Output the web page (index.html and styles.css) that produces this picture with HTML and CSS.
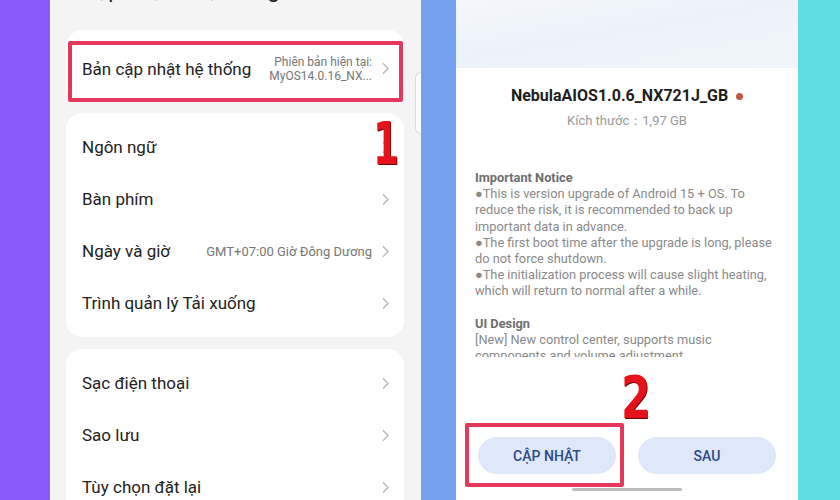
FILE: index.html
```html
<!DOCTYPE html>
<html lang="vi">
<head>
    <meta charset="UTF-8">
    <meta name="viewport" content="width=device-width, initial-scale=1.0">
    <title>Cập nhật hệ thống</title>
    <link rel="stylesheet" href="styles.css">
</head>
<body>
    <div class="stage">
        <div class="side side-purple"></div>

        <!-- Left phone: settings list -->
        <div class="phone-left">
            <h2 class="page-title">Cập nhật &amp; hệ thống</h2>

            <div class="card card-first">
                <div class="row">
                    <span class="row-label">Bản cập nhật hệ thống</span>
                    <span class="row-value two-line">Phiên bản hiện tại:<br>MyOS14.0.16_NX...</span>
                    <svg class="chevron" viewBox="0 0 8 14"><polyline points="1,1 7,7 1,13"/></svg>
                </div>
                <div class="highlight"></div>
            </div>

            <div class="card">
                <div class="row">
                    <span class="row-label">Ngôn ngữ</span>
                    <svg class="chevron" viewBox="0 0 8 14"><polyline points="1,1 7,7 1,13"/></svg>
                </div>
                <div class="row">
                    <span class="row-label">Bàn phím</span>
                    <svg class="chevron" viewBox="0 0 8 14"><polyline points="1,1 7,7 1,13"/></svg>
                </div>
                <div class="row">
                    <span class="row-label">Ngày và giờ</span>
                    <span class="row-value">GMT+07:00 Giờ Đông Dương</span>
                    <svg class="chevron" viewBox="0 0 8 14"><polyline points="1,1 7,7 1,13"/></svg>
                </div>
                <div class="row">
                    <span class="row-label">Trình quản lý Tải xuống</span>
                    <svg class="chevron" viewBox="0 0 8 14"><polyline points="1,1 7,7 1,13"/></svg>
                </div>
            </div>

            <div class="card">
                <div class="row">
                    <span class="row-label">Sạc điện thoại</span>
                    <svg class="chevron" viewBox="0 0 8 14"><polyline points="1,1 7,7 1,13"/></svg>
                </div>
                <div class="row">
                    <span class="row-label">Sao lưu</span>
                    <svg class="chevron" viewBox="0 0 8 14"><polyline points="1,1 7,7 1,13"/></svg>
                </div>
                <div class="row">
                    <span class="row-label">Tùy chọn đặt lại</span>
                    <svg class="chevron" viewBox="0 0 8 14"><polyline points="1,1 7,7 1,13"/></svg>
                </div>
            </div>

            <div class="edge-tab"></div>
            <div class="step step-one">1</div>
        </div>

        <div class="side side-blue"></div>

        <!-- Right phone: update dialog -->
        <div class="phone-right">
            <div class="update-banner"></div>
            <div class="update-name">NebulaAIOS1.0.6_NX721J_GB <span class="dot"></span></div>
            <div class="update-size">Kích thước：1,97 GB</div>

            <div class="notes">
                <div class="notes-title">Important Notice</div>
                <p>●This is version upgrade of Android 15 + OS. To<br>reduce the risk, it is recommended to back up<br>important data in advance.<br>●The first boot time after the upgrade is long, please<br>do not force shutdown.<br>●The initialization process will cause slight heating,<br>which will return to normal after a while.</p>
                <div class="notes-title">UI Design</div>
                <p>[New] New control center, supports music<br>components and volume adjustment</p>
            </div>

            <div class="actions">
                <button class="pill">CẬP NHẬT</button>
                <button class="pill">SAU</button>
            </div>
            <div class="home-bar"></div>

            <div class="highlight highlight-btn"></div>
            <div class="step step-two">2</div>
        </div>

        <div class="side side-cyan"></div>
    </div>
</body>
</html>
```

FILE: styles.css
```css
body {
    margin: 0;
    font-family: Roboto, "Noto Sans", sans-serif;
    overflow: hidden;
}

.stage {
    display: flex;
    width: 840px;
    height: 500px;
    overflow: hidden;
}

.side {
    flex-shrink: 0;
}

.side-purple {
    width: 50px;
    background-color: #8a5af9;
}

.side-blue {
    width: 35px;
    background-color: #74a0ef;
}

.side-cyan {
    width: 42px;
    background-color: #5fdde3;
}

/* left phone */
.phone-left {
    position: relative;
    width: 371px;
    flex-shrink: 0;
    background-color: #f4f4f4;
    padding: 0 17px 0 16px;
    box-sizing: border-box;
    overflow: hidden;
}

.page-title {
    height: 30px;
    margin: -25px 0 25px 16px;
    font-size: 22px;
    line-height: 30px;
    font-weight: 400;
    color: #222;
}

.card {
    position: relative;
    background-color: #fff;
    border-radius: 16px;
    padding: 8px 0;
    margin-bottom: 12px;
}

.card-first {
    height: 71px;
    padding: 0;
    display: flex;
    align-items: center;
}

.card-first .row {
    flex: 1;
    padding-top: 6px;
}

.row {
    display: flex;
    align-items: center;
    height: 52px;
    padding: 0 15px 0 16px;
}

.row-label {
    flex: 1;
    font-size: 17px;
    color: #222;
}

.row-value {
    font-size: 13px;
    color: #767676;
    margin-right: 10px;
}

.two-line {
    font-size: 12px;
    line-height: 14px;
    text-align: right;
}

.chevron {
    width: 7px;
    height: 13px;
    fill: none;
    stroke: #b4b4b4;
    stroke-width: 1.4;
}

.highlight {
    position: absolute;
    top: 11px;
    left: 2px;
    right: 1px;
    bottom: -1px;
    border: 4px solid #e3385c;
    border-radius: 2px;
}

.edge-tab {
    position: absolute;
    top: 72px;
    right: 0;
    width: 5px;
    height: 60px;
    background-color: #fff;
    border: 1px solid #dcdcdc;
    border-right: none;
    border-radius: 8px 0 0 8px;
}

.step {
    position: absolute;
    font-family: "Liberation Sans Narrow", "DejaVu Sans Condensed", sans-serif;
    font-weight: 700;
    font-size: 58px;
    line-height: 58px;
    color: #e5121a;
    text-shadow: 1px 1px 0 #5c0a0a;
    transform-origin: left top;
}

.step-one {
    top: 115px;
    left: 323px;
    transform: scaleX(0.72);
}

/* right phone */
.phone-right {
    position: relative;
    width: 342px;
    flex-shrink: 0;
    background-color: #fff;
    overflow: hidden;
}

.update-banner {
    height: 68px;
    background: linear-gradient(170deg, #f4f7fc 0%, #edf2fa 45%, #f1f5fb 100%);
}

.update-name {
    margin-top: 18px;
    text-align: center;
    font-size: 16px;
    line-height: 20px;
    font-weight: 700;
    color: #1e1e1e;
}

.dot {
    display: inline-block;
    width: 7px;
    height: 7px;
    margin-left: 4px;
    border-radius: 50%;
    background-color: #c4533f;
    vertical-align: middle;
}

.update-size {
    margin-top: 6px;
    text-align: center;
    font-size: 13px;
    line-height: 18px;
    color: #9a9a9a;
}

.notes {
    margin-top: 40px;
    padding: 0 18px 0 19px;
    height: 187px;
    overflow: hidden;
    font-size: 12.8px;
    line-height: 16.2px;
    color: #8a8a8a;
}

.notes p {
    margin: 0 0 16.2px;
}

.notes-title {
    font-weight: 700;
    color: #6e6e6e;
}

.actions {
    display: flex;
    gap: 22px;
    margin-top: 80px;
    padding: 0 22px;
}

.pill {
    flex: 1;
    height: 37px;
    border: none;
    border-radius: 19px;
    background-color: #dee8f8;
    color: #2c4a86;
    font-family: Roboto, sans-serif;
    font-size: 14px;
    font-weight: 500;
}

.home-bar {
    width: 110px;
    height: 3px;
    margin: 14px auto 0;
    background-color: #bdbdbd;
    border-radius: 2px;
}

.highlight-btn {
    top: 423px;
    left: 9px;
    right: auto;
    bottom: auto;
    width: 151px;
    height: 56px;
}

.step-two {
    top: 369px;
    left: 165px;
    transform: scaleX(0.82);
}
```
